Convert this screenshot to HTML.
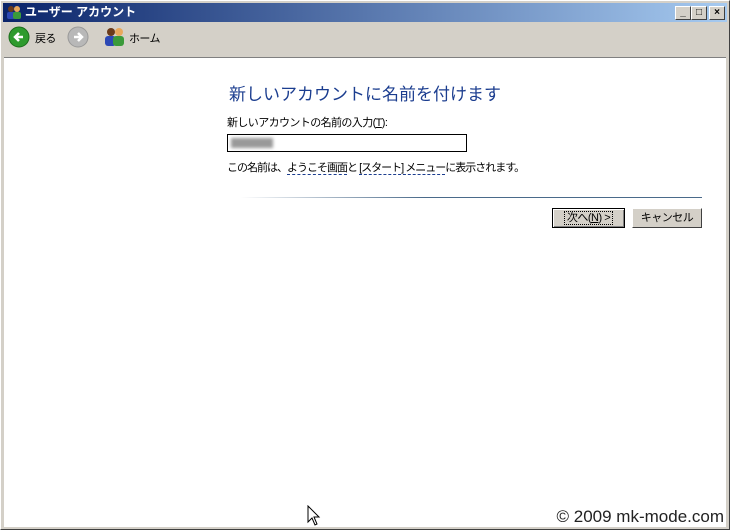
<!DOCTYPE html>
<html><head><meta charset="utf-8"><style>
*{margin:0;padding:0;box-sizing:border-box}
body{width:730px;height:530px;background:#d4d0c8;position:relative;overflow:hidden;font-family:"Liberation Sans","Noto Sans CJK JP",sans-serif;font-size:12px;color:#000}
.frame{position:absolute;left:0;top:0;width:730px;height:530px;border:1px solid #fff;border-right-color:#404040;border-bottom-color:#404040}
.title{position:absolute;left:3px;top:3px;width:724px;height:19px;background:linear-gradient(90deg,#0a246a,#a6caf0);color:#fff;font-weight:bold;font-size:12px;line-height:19px;padding-left:22px}
.tb{position:absolute;top:6px;width:16px;height:14px;background:#d4d0c8;border:1px solid;border-color:#fff #404040 #404040 #fff;font-size:10px;line-height:12px;text-align:center;color:#000;font-weight:bold}
.toolbar{position:absolute;left:3px;top:22px;width:724px;height:34px}
.content{position:absolute;left:4px;top:57px;width:722px;height:470px;background:#fff;border-top:1px solid #808080}
.t{position:absolute;white-space:nowrap}
.s{font-size:11px;letter-spacing:-0.6px}
a{color:#000;text-decoration:none;border-bottom:1px dashed #1b3d8f}
.btn{position:absolute;height:20px;background:#d4d0c8;border:1px solid;border-color:#fff #404040 #404040 #fff;text-align:center;line-height:18px;font-size:11px;letter-spacing:-0.5px}
</style></head><body>
<div class="frame"></div>
<div class="title">
<svg style="position:absolute;left:3px;top:2px" width="16" height="15"><circle cx="5" cy="4" r="3" fill="#6b3b1b"/><rect x="1" y="7" width="8" height="7" rx="2" fill="#2c48b5"/><circle cx="11" cy="4" r="3" fill="#e8a85c"/><rect x="7" y="7" width="8" height="7" rx="2" fill="#3a9a3a"/></svg>
ユーザー アカウント</div>
<div class="tb" style="left:675px">_</div>
<div class="tb" style="left:691px">□</div>
<div class="tb" style="left:709px">×</div>
<div class="toolbar">
<svg style="position:absolute;left:5px;top:4px" width="22" height="22"><circle cx="11" cy="11" r="10" fill="#2e9b2e" stroke="#1c6d1c"/><path d="M15 11H7M11 7L7 11L11 15" stroke="#fff" stroke-width="2.5" fill="none"/></svg>
<span class="t s" style="left:32px;top:8px">戻る</span>
<svg style="position:absolute;left:64px;top:4px" width="22" height="22"><circle cx="11" cy="11" r="10" fill="#b8b8b8" stroke="#999"/><path d="M7 11H15M11 7L15 11L11 15" stroke="#fff" stroke-width="2.5" fill="none"/></svg>
<svg style="position:absolute;left:100px;top:4px" width="24" height="22"><circle cx="8" cy="6" r="4" fill="#6b3b1b"/><rect x="2" y="10" width="11" height="10" rx="3" fill="#2c48b5"/><circle cx="16" cy="6" r="4" fill="#e8a85c"/><rect x="10" y="10" width="11" height="10" rx="3" fill="#3a9a3a"/></svg>
<span class="t s" style="left:126px;top:8px">ホーム</span>
</div>
<div class="content">
<span class="t" style="left:225px;top:22px;font-size:17px;color:#1b3d8f">新しいアカウントに名前を付けます</span>
<span class="t s" style="left:223px;top:56px">新しいアカウントの名前の入力(<u>T</u>):</span>
<div style="position:absolute;left:223px;top:76px;width:240px;height:18px;border:1px solid #000;background:#fff"><div style="position:absolute;left:3px;top:3px;width:42px;height:10px;background:#999;filter:blur(1.5px)"></div></div>
<span class="t s" style="left:223px;top:101px;letter-spacing:-1px">この名前は、<a>ようこそ画面</a>と <a>[スタート] メニュー</a>に表示されます。</span>
<div style="position:absolute;left:236px;top:139px;width:462px;height:1px;background:linear-gradient(90deg,#fff,#4a6a8a 40%)"></div>
<div class="btn" style="left:548px;top:150px;width:73px;border:1px solid #000;box-shadow:inset 1px 1px #fff,inset -1px -1px #808080"><span style="outline:1px dotted #000;padding:0 2px">次へ(<u>N</u>) &gt;</span></div>
<div class="btn" style="left:628px;top:150px;width:70px">キャンセル</div>
<svg style="position:absolute;left:303px;top:447px" width="14" height="22"><path d="M1 1V17L5 13L8 20L10 19L7 12H12Z" fill="#fff" stroke="#000"/></svg>
<span class="t" style="right:2px;top:449px;font-size:17px;color:#222">© 2009 mk-mode.com</span>
</div>
</body></html>
